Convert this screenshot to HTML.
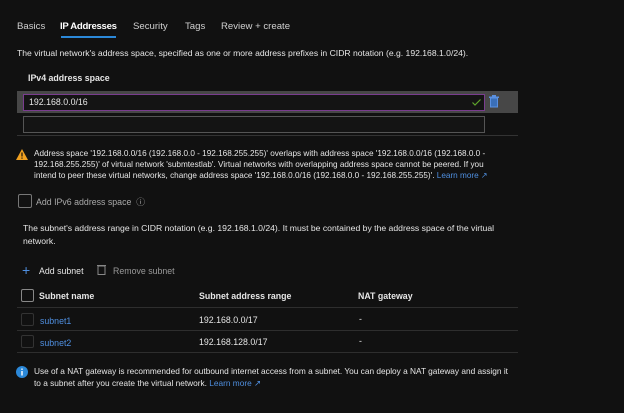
<!DOCTYPE html>
<html><head><meta charset="utf-8"><style>
body{margin:0;width:624px;height:413px;background:#111111;font-family:"Liberation Sans",sans-serif;color:#e6e6e6;position:relative;overflow:hidden;font-size:8.8px}
.a{position:absolute;white-space:nowrap}
.line{position:absolute;height:1px;background:#333}
.lnk{color:#4f8fe0}
.cb{position:absolute;width:11px;height:11px;border:1px solid #777;border-radius:2px}
</style></head><body>
<div class="a" style="left:17px;top:21px;font-size:9.6px;color:#d0d0d0">Basics</div>
<div class="a" style="left:60px;top:21px;font-size:9.6px;font-weight:bold;color:#fff;letter-spacing:-0.3px">IP Addresses</div>
<div style="position:absolute;left:61px;top:36px;width:55px;height:2px;background:#2b88d8"></div>
<div class="a" style="left:133px;top:21px;font-size:9.6px;color:#d0d0d0">Security</div>
<div class="a" style="left:185px;top:21px;font-size:9.6px;color:#d0d0d0">Tags</div>
<div class="a" style="left:221px;top:21px;font-size:9.6px;color:#d0d0d0">Review + create</div>
<div class="a" style="left:17px;top:48px;font-size:8.6px">The virtual network's address space, specified as one or more address prefixes in CIDR notation (e.g. 192.168.1.0/24).</div>
<div class="a" style="left:28px;top:73px;font-weight:bold">IPv4 address space</div>
<div style="position:absolute;left:17px;top:91px;width:501px;height:22px;background:#474747"></div>
<div style="position:absolute;left:23px;top:94px;width:460px;height:15px;background:#141414;border:1px solid #7a3d8f"></div>
<div class="a" style="left:29px;top:97px">192.168.0.0/16</div>
<svg style="position:absolute;left:472px;top:99px" width="9" height="7" viewBox="0 0 9 7"><path d="M0.5 3.5L3 6L8.5 0.5" fill="none" stroke="#5fa52c" stroke-width="1.2"/></svg>
<svg style="position:absolute;left:489px;top:95px" width="10" height="13" viewBox="0 0 10 13"><rect x="1.5" y="3" width="7" height="9" fill="#3a6fb8" stroke="#5a90e0"/><rect x="0" y="1.5" width="10" height="1.5" fill="#5a90e0"/><rect x="3" y="0" width="4" height="2" fill="#5a90e0"/></svg>
<div style="position:absolute;left:23px;top:116px;width:460px;height:15px;background:#141414;border:1px solid #555"></div>
<div class="line" style="left:17px;top:135px;width:501px"></div>
<svg style="position:absolute;left:16px;top:149px" width="12" height="11" viewBox="0 0 12 11"><path d="M6 0L12 11H0Z" fill="#f0a020"/><rect x="5.4" y="3.5" width="1.2" height="4" fill="#111"/><rect x="5.4" y="8.5" width="1.2" height="1.2" fill="#111"/></svg>
<div class="a" style="left:34px;top:148px;line-height:11px;font-size:8.2px">Address space '192.168.0.0/16 (192.168.0.0 - 192.168.255.255)' overlaps with address space '192.168.0.0/16 (192.168.0.0 -<br>192.168.255.255)' of virtual network 'submtestlab'. Virtual networks with overlapping address space cannot be peered. If you<br>intend to peer these virtual networks, change address space '192.168.0.0/16 (192.168.0.0 - 192.168.255.255)'. <span class="lnk">Learn more ↗</span></div>
<div class="cb" style="left:18px;top:194px;width:12px;height:12px"></div>
<div class="a" style="left:36px;top:195px;color:#aaa">Add IPv6 address space &nbsp;ⓘ</div>
<div class="a" style="left:23px;top:222px;line-height:13px;font-size:8.65px">The subnet's address range in CIDR notation (e.g. 192.168.1.0/24). It must be contained by the address space of the virtual<br>network.</div>
<div class="a" style="left:22px;top:262px;color:#4f8fe0;font-size:14px">+</div>
<div class="a" style="left:39px;top:266px">Add subnet</div>
<svg style="position:absolute;left:97px;top:264px" width="9" height="11" viewBox="0 0 9 11"><rect x="1" y="2" width="7" height="8.5" fill="none" stroke="#888"/><rect x="0" y="1" width="9" height="1" fill="#888"/></svg>
<div class="a" style="left:113px;top:266px;color:#999">Remove subnet</div>
<div class="cb" style="left:21px;top:289px;width:11px;height:11px;border-color:#888"></div>
<div class="a" style="left:39px;top:291px;font-weight:bold">Subnet name</div>
<div class="a" style="left:199px;top:291px;font-weight:bold">Subnet address range</div>
<div class="a" style="left:358px;top:291px;font-weight:bold">NAT gateway</div>
<div class="line" style="left:17px;top:307px;width:501px;background:#2e2e2e"></div>
<div class="cb" style="left:21px;top:313px;border-color:#333"></div>
<div class="a lnk" style="left:40px;top:316px">subnet1</div>
<div class="a" style="left:199px;top:315px">192.168.0.0/17</div>
<div class="a" style="left:359px;top:314px">-</div>
<div class="line" style="left:17px;top:330px;width:501px;background:#2e2e2e"></div>
<div class="cb" style="left:21px;top:335px;border-color:#333"></div>
<div class="a lnk" style="left:40px;top:338px">subnet2</div>
<div class="a" style="left:199px;top:337px">192.168.128.0/17</div>
<div class="a" style="left:359px;top:336px">-</div>
<div class="line" style="left:17px;top:352px;width:501px;background:#2e2e2e"></div>
<svg style="position:absolute;left:16px;top:366px" width="12" height="12"><circle cx="6" cy="6" r="6" fill="#2b88d8"/><rect x="5.3" y="5" width="1.4" height="4.5" fill="#fff"/><rect x="5.3" y="2.5" width="1.4" height="1.4" fill="#fff"/></svg>
<div class="a" style="left:34px;top:366px;line-height:11.5px;font-size:8.3px">Use of a NAT gateway is recommended for outbound internet access from a subnet. You can deploy a NAT gateway and assign it<br>to a subnet after you create the virtual network. <span class="lnk">Learn more ↗</span></div>
</body></html>
